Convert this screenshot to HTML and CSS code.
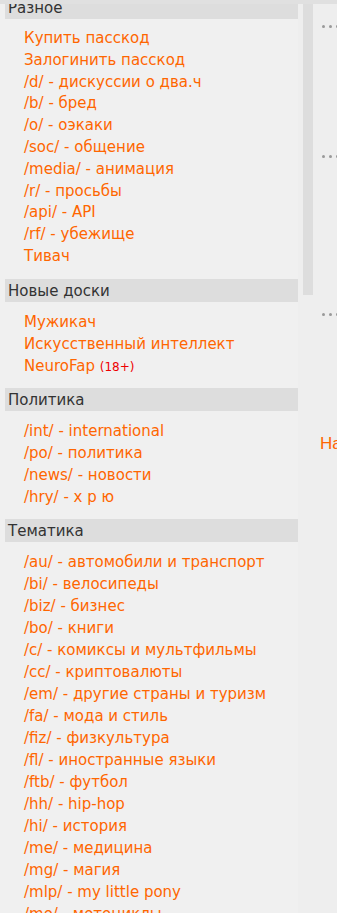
FILE: index.html
```html
<!DOCTYPE html>
<html lang="ru">
<head>
<meta charset="utf-8">
<title>Доски</title>
<link rel="stylesheet" href="styles.css">
</head>
<body>
<div class="topbar"></div>
<div class="layout">
  <nav class="sidebar">
    <section class="group group-first">
      <h3 class="group-title">Разное</h3>
      <ul class="group-list">
        <li><a class="link" href="#">Купить пасскод</a></li>
        <li><a class="link" href="#">Залогинить пасскод</a></li>
        <li><a class="link" href="#">/d/ - дискуссии о два.ч</a></li>
        <li><a class="link" href="#">/b/ - бред</a></li>
        <li><a class="link" href="#">/o/ - оэкаки</a></li>
        <li><a class="link" href="#">/soc/ - общение</a></li>
        <li><a class="link" href="#">/media/ - анимация</a></li>
        <li><a class="link" href="#">/r/ - просьбы</a></li>
        <li><a class="link" href="#">/api/ - API</a></li>
        <li><a class="link" href="#">/rf/ - убежище</a></li>
        <li><a class="link" href="#">Тивач</a></li>
      </ul>
    </section>
    <section class="group">
      <h3 class="group-title">Новые доски</h3>
      <ul class="group-list">
        <li><a class="link" href="#">Мужикач</a></li>
        <li><a class="link" href="#">Искусственный интеллект</a></li>
        <li><a class="link" href="#">NeuroFap</a> <span class="adult">(18+)</span></li>
      </ul>
    </section>
    <section class="group">
      <h3 class="group-title">Политика</h3>
      <ul class="group-list">
        <li><a class="link" href="#">/int/ - international</a></li>
        <li><a class="link" href="#">/po/ - политика</a></li>
        <li><a class="link" href="#">/news/ - новости</a></li>
        <li><a class="link" href="#">/hry/ - х р ю</a></li>
      </ul>
    </section>
    <section class="group">
      <h3 class="group-title">Тематика</h3>
      <ul class="group-list">
        <li><a class="link" href="#">/au/ - автомобили и транспорт</a></li>
        <li><a class="link" href="#">/bi/ - велосипеды</a></li>
        <li><a class="link" href="#">/biz/ - бизнес</a></li>
        <li><a class="link" href="#">/bo/ - книги</a></li>
        <li><a class="link" href="#">/c/ - комиксы и мультфильмы</a></li>
        <li><a class="link" href="#">/cc/ - криптовалюты</a></li>
        <li><a class="link" href="#">/em/ - другие страны и туризм</a></li>
        <li><a class="link" href="#">/fa/ - мода и стиль</a></li>
        <li><a class="link" href="#">/fiz/ - физкультура</a></li>
        <li><a class="link" href="#">/fl/ - иностранные языки</a></li>
        <li><a class="link" href="#">/ftb/ - футбол</a></li>
        <li><a class="link" href="#">/hh/ - hip-hop</a></li>
        <li><a class="link" href="#">/hi/ - история</a></li>
        <li><a class="link" href="#">/me/ - медицина</a></li>
        <li><a class="link" href="#">/mg/ - магия</a></li>
        <li><a class="link" href="#">/mlp/ - my little pony</a></li>
        <li><a class="link" href="#">/mo/ - мотоциклы</a></li>
        <li><a class="link" href="#">/mov/ - фильмы</a></li>
      </ul>
    </section>
  </nav>
  <div class="track"></div>
  <main class="main">
    <div class="post post-1"><span class="dots"><i></i><i></i><i></i></span></div>
    <div class="post post-2"><span class="dots"><i></i><i></i><i></i></span></div>
    <div class="post post-3"><span class="dots"><i></i><i></i><i></i></span></div>
    <a class="main-link" href="#">Наверх</a>
  </main>
</div>
</body>
</html>
```
FILE: styles.css
```css
html, body {
  margin: 0;
  padding: 0;
}
body {
  background: #eeeeee;
  font-family: "DejaVu Sans", "Open Sans", sans-serif;
  overflow: hidden;
  height: 913px;
}
.topbar {
  position: fixed;
  top: 0;
  left: 0;
  right: 0;
  height: 4px;
  background: #e0e0e0;
  z-index: 2;
}
.layout {
  display: flex;
  align-items: flex-start;
}
.sidebar {
  width: 298px;
  flex: none;
  background: #f0f0f0;
}
.group-first {
  margin-top: -4px;
}
.group-title {
  margin: 0 0 0 5px;
  height: 23px;
  line-height: 24px;
  padding-left: 3px;
  background: #dddddd;
  color: #333333;
  font-size: 15px;
  font-weight: normal;
}
.group-list {
  list-style: none;
  margin: 0;
  padding: 9px 0 11px 24px;
}
.group-list li {
  line-height: 22px;
  height: 22px;
  font-size: 15px;
  white-space: nowrap;
}
.group-first .group-list li {
  line-height: 21.8px;
  height: 21.8px;
}
.link {
  color: #ff6600;
  text-decoration: none;
}
.adult {
  color: #ee0000;
  font-size: 12px;
}
.track {
  flex: none;
  width: 10px;
  height: 291px;
  margin: 4px 0 0 5px;
  background: #dddddd;
}
.main {
  flex: 1;
  min-width: 0;
  padding-left: 9px;
  overflow: hidden;
}
.post {
  height: 24px;
  display: flex;
  align-items: center;
}
.post-1 { margin-top: 14px; }
.post-2 { margin-top: 106px; }
.post-3 { margin-top: 134px; }
.dots {
  display: flex;
  gap: 4px;
}
.dots i {
  display: block;
  width: 3px;
  height: 3px;
  border-radius: 50%;
  background: #999999;
}
.main-link {
  display: block;
  margin-top: 108px;
  margin-left: -2px;
  font-family: "Liberation Sans", Arial, sans-serif;
  font-size: 17px;
  color: #ff6600;
  text-decoration: none;
  white-space: nowrap;
}
```
